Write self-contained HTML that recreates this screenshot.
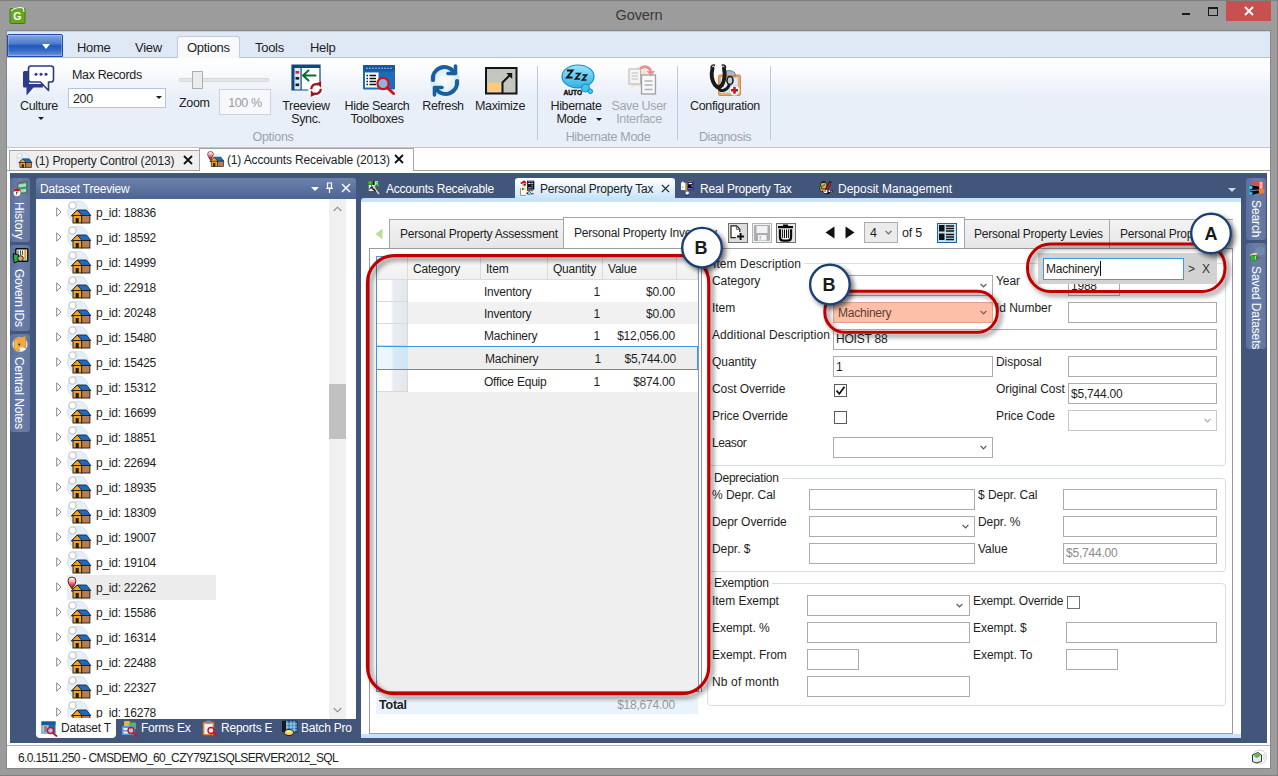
<!DOCTYPE html>
<html>
<head>
<meta charset="utf-8">
<title>Govern</title>
<style>
*{box-sizing:border-box;margin:0;padding:0}
html,body{width:1278px;height:776px;overflow:hidden;background:#9b9b9b;font-family:"Liberation Sans",sans-serif;font-size:12px;color:#1e1e1e}
.abs{position:absolute}
#frame{position:absolute;left:0;top:0;width:1278px;height:776px;background:#9c9c9c;box-shadow:inset 0 1px 0 #808080,inset -1px 0 0 #808080,inset 0 -1px 0 #808080}
#title{position:absolute;left:0;top:7px;width:1278px;text-align:center;font-size:14.5px;letter-spacing:-.1px;color:#3a3a3a}
#closebtn{position:absolute;left:1226px;top:1px;width:45px;height:20px;background:#c75050}
#content{position:absolute;left:7px;top:31px;width:1263px;height:737px;background:#fff;outline:1px solid #868686}
/* ribbon */
#tabrow{position:absolute;left:0;top:0;width:1263px;height:27px;background:#dfe8f5;border-top:1px solid #c3d0e4;border-bottom:1px solid #b4c6dd}
#appbtn{position:absolute;left:0;top:2px;width:56px;height:23px;border:1px solid #1d4db0;border-radius:2px 2px 0 0;background:linear-gradient(#86a6df 0%,#4f7dcf 40%,#2256b8 52%,#3a6cc8 75%,#6d95da 100%);box-shadow:inset 0 0 0 1px rgba(255,255,255,.25)}
.rtab{position:absolute;top:8px;letter-spacing:-0.3px;font-size:13px;color:#1e1e1e}
#opttab{position:absolute;left:170px;top:4px;width:63px;height:23px;background:#f7f9fd;border:1px solid #c0cde0;border-bottom:none;border-radius:3px 3px 0 0}
#ribbon{position:absolute;left:0;top:27px;width:1263px;height:90px;z-index:1;background:linear-gradient(#ffffff 0%,#fbfcfe 12%,#eef3fa 34%,#e9eff9 45%,#e9eff9 100%);border-bottom:1px solid #b6c6db}
.rlabel{position:absolute;text-align:center;font-size:12.5px;letter-spacing:-0.35px;line-height:13px;margin-top:1px;color:#1e1e1e;white-space:nowrap}
.rgroup{position:absolute;font-size:12.5px;letter-spacing:-0.3px;color:#9aa2ad;white-space:nowrap;text-align:center}
.rsep{position:absolute;top:8px;width:1px;height:74px;background:#bccadc}
.darr{position:absolute;width:0;height:0;border-left:3px solid transparent;border-right:3px solid transparent;border-top:3px solid #1a1a1a}
/* doc tabs */
#doctabs{position:absolute;left:0;top:116px;width:1263px;height:26px;background:#fff}

/* doc tabs content */
.dtab{position:absolute;font-size:12px;white-space:nowrap;color:#1e1e1e;letter-spacing:-0.15px}
.xmark{position:absolute;width:10px;height:10px}
/* side strips */
.vtab{position:absolute;width:20px;background:linear-gradient(90deg,#5b6f9b,#6a7ea8 50%,#61759f);border-radius:3px}
.vtxt{position:absolute;left:0;top:0;transform-origin:0 0;transform:rotate(90deg);font-size:14px;color:#fff;white-space:nowrap}
/* tree */
#tvhead{position:absolute;left:26px;top:5px;width:320px;height:21px;background:linear-gradient(#6d82ab,#4d6494);border-radius:3px 3px 0 0;color:#fff;font-size:12px}
#tvbody{position:absolute;left:26px;top:26px;width:320px;height:520px;background:#fff;overflow:hidden}
.trow{position:absolute;left:0;height:25px;width:300px}
.trow .tx{position:absolute;left:60px;top:6px;font-size:12px;letter-spacing:-0.25px;white-space:nowrap}
.trow svg.hs{position:absolute;left:30px;top:0}
.trow .ex{position:absolute;left:20px;top:7px}

/* page overlay in absolute page coords */
#pg{position:absolute;left:0;top:0;width:1278px;height:776px}
#pg div,#pg svg{position:absolute}
.wt{color:#fff;font-size:12px;letter-spacing:-0.22px;white-space:nowrap}
.bt{color:#1e1e1e;font-size:12px;letter-spacing:-0.22px;white-space:nowrap}
.fl{letter-spacing:-0.05px !important}
.itab{background:linear-gradient(#f3f3f3,#e6e6e6);border:1px solid #a6a6a6}
.inp{background:#fff;border:1px solid #ababab}
.grp{border:1px solid #d5dfe8;border-radius:4px}
.gl{background:#fff;padding:0 3px 0 2px}
.chev{width:7px;height:5px}
.cb{width:13px;height:13px;background:#fff;border:1px solid #5a5a5a}
.gh{top:257px;height:23px;background:linear-gradient(#fafafa,#f0f0f0);border-right:1px solid #dcdcdc;border-bottom:1px solid #dcdcdc}
.rh{left:377px;width:31px;height:22px;background:linear-gradient(90deg,#ffffff 45%,#e9edf1 55%,#e4e8ec);border-right:1px solid #d9d9d9;border-bottom:1px solid #d9d9d9}
/* main dark */
#main{position:absolute;left:3px;top:142px;width:1257px;height:570px;background:#42557a}
#status{position:absolute;left:0px;top:714px;width:1263px;height:23px;background:#fff;border-top:1px solid #b0b0b0}
</style>
</head>
<body>
<svg width="0" height="0" style="position:absolute"><defs><linearGradient id="ping" x1="0" y1="0" x2="0" y2="1"><stop offset="0" stop-color="#fff"/><stop offset=".35" stop-color="#f8b0b4"/><stop offset=".7" stop-color="#ea2a36"/><stop offset="1" stop-color="#c81420"/></linearGradient>
<symbol id="house" viewBox="0 0 26 25">
  <ellipse cx="12" cy="12" rx="10.5" ry="11" fill="#e4eff8" stroke="#d8dde2" stroke-width=".8"/>
  <circle cx="6.5" cy="5.5" r="3.6" fill="#fff" stroke="#c9c9c9" stroke-width="1.4"/>
  <path d="M6 15.5 L11.2 10 H20.5 L24.8 15.5 Z" fill="#1c6bc0" stroke="#1a2a44" stroke-width=".9" stroke-linejoin="round"/>
  <path d="M5.3 16 L11.2 10 L16.6 16 Z" fill="#f5a21d" stroke="#1a1a1a" stroke-width=".9" stroke-linejoin="round"/>
  <rect x="7" y="15.5" width="8.7" height="7.5" fill="#f5a21d" stroke="#1a1a1a" stroke-width=".9"/>
  <rect x="15.7" y="15.5" width="8.2" height="7.5" fill="#b87c4e" stroke="#1a1a1a" stroke-width=".9"/>
  <rect x="9.7" y="18" width="3" height="5" fill="#1a1a1a"/>
</symbol>
<symbol id="housepin" viewBox="0 0 26 25">
  <ellipse cx="13" cy="13" rx="9" ry="9" fill="#e9f1f8"/>
  <path d="M6 15.5 L11.2 10 H20.5 L24.8 15.5 Z" fill="#1c6bc0" stroke="#1a2a44" stroke-width=".9" stroke-linejoin="round"/>
  <path d="M5.3 16 L11.2 10 L16.6 16 Z" fill="#f5a21d" stroke="#1a1a1a" stroke-width=".9" stroke-linejoin="round"/>
  <rect x="7" y="15.5" width="8.7" height="7.5" fill="#f5a21d" stroke="#1a1a1a" stroke-width=".9"/>
  <rect x="15.7" y="15.5" width="8.2" height="7.5" fill="#b87c4e" stroke="#1a1a1a" stroke-width=".9"/>
  <rect x="9.7" y="18" width="3" height="5" fill="#1a1a1a"/>
  <path d="M6 14 Q2 8.5 2 6 A4 4 0 0 1 10 6 Q10 8.5 6 14Z" fill="url(#ping)" stroke="#3a1c1c" stroke-width=".9"/>
</symbol>
<symbol id="xm" viewBox="0 0 10 10"><path d="M1 1 L9 9 M9 1 L1 9" stroke="#111" stroke-width="1.8"/></symbol>
<symbol id="xmw" viewBox="0 0 10 10"><path d="M1 1 L9 9 M9 1 L1 9" stroke="#fff" stroke-width="1.5"/></symbol>
<symbol id="exp" viewBox="0 0 6 10"><path d="M.7 .8 L5 5 L.7 9.2 Z" fill="#fff" stroke="#8a8a8a" stroke-width="1"/></symbol>
</defs></svg>
<div id="frame">
  <div id="title">Govern</div>
  <div id="closebtn"></div>
  <svg class="abs" style="left:9px;top:7px" width="17" height="17" viewBox="0 0 17 17">
    <rect x="1" y="1.5" width="15" height="15" rx="1" fill="#69a81e" stroke="#3f7d12" stroke-width="1"/>
    <path d="M2 4 Q5 .5 9 1 M8 1 Q12 0 14.5 1.5 L15 5" stroke="#f4f8ec" stroke-width="1.1" fill="none"/>
    <text x="4.2" y="13" font-family="Liberation Sans" font-weight="bold" font-size="10.5" fill="#fff">G</text>
  </svg>
  <div class="abs" style="left:1182px;top:13px;width:8px;height:2px;background:#1a1a1a"></div>
  <div class="abs" style="left:1208px;top:7px;width:10px;height:9px;border:1px solid #1a1a1a;border-top-width:2px"></div>
  <svg class="abs" style="left:1244px;top:6px" width="10" height="10" viewBox="0 0 10 10"><path d="M1 1 L9 9 M9 1 L1 9" stroke="#fff" stroke-width="1.8"/></svg>
</div>
<div id="content">
  <div id="tabrow">
    <div id="appbtn"><div class="abs" style="left:34px;top:9px;width:0;height:0;border-left:4px solid transparent;border-right:4px solid transparent;border-top:5px solid #fff"></div></div>
    <div id="opttab"></div>
    <div class="rtab" style="left:70px">Home</div>
    <div class="rtab" style="left:128px">View</div>
    <div class="rtab" style="left:180px">Options</div>
    <div class="rtab" style="left:248px">Tools</div>
    <div class="rtab" style="left:303px">Help</div>
  </div>
  <div id="ribbon">
    <!-- Culture -->
    <svg class="abs" style="left:14px;top:6px" width="36" height="34" viewBox="0 0 36 34">
      <path d="M3.5 7 H8 V20 H22 V23.5 H12.5 L5.5 31.5 V23.5 H3.5 Q2 23.5 2 22 V8.5 Q2 7 3.5 7Z" fill="#2b3a8c"/>
      <path d="M10 2 H30 Q32.5 2 32.5 4.5 V15.5 Q32.5 18 30 18 H27.5 V26.5 L19.5 18 H10 Q7.5 18 7.5 15.5 V4.5 Q7.5 2 10 2Z" fill="#fff" stroke="#2b3a8c" stroke-width="1.6" stroke-linejoin="round"/>
      <circle cx="15" cy="10.3" r="1.5" fill="#2b3a8c"/><circle cx="20" cy="10.3" r="1.5" fill="#2b3a8c"/><circle cx="25" cy="10.3" r="1.5" fill="#2b3a8c"/>
    </svg>
    <div class="rlabel" style="left:2px;top:41px;width:60px">Culture</div>
    <div class="darr" style="left:31px;top:59px"></div>
    <!-- Max records -->
    <div class="rlabel" style="left:65px;top:10px;text-align:left">Max Records</div>
    <div class="abs" style="left:61px;top:30px;width:98px;height:20px;background:#fff;border:1px solid #b3c6de"></div>
    <div class="rlabel" style="left:66px;top:34px;text-align:left">200</div>
    <div class="darr" style="left:149px;top:38px"></div>
    <!-- Zoom slider -->
    <div class="abs" style="left:172px;top:20px;width:90px;height:4px;background:#e3e5e7;border:1px solid #d5d8db;border-radius:1px"></div>
    <div class="abs" style="left:185px;top:13px;width:11px;height:18px;background:#ececec;border:1px solid #aeaeae"></div>
    <div class="rlabel" style="left:172px;top:38px;text-align:left">Zoom</div>
    <div class="abs" style="left:212px;top:31px;width:52px;height:26px;background:#f6f8fc;border:1px solid #cdd2d9"></div>
    <div class="rlabel" style="left:212px;top:38px;width:52px;color:#9a9a9a">100 %</div>
    <!-- Treeview sync -->
    <svg class="abs" style="left:283px;top:6px" width="36" height="36" viewBox="0 0 36 36">
      <rect x="2" y="1" width="28" height="25" fill="#fff"/>
      <rect x="2" y="1" width="9" height="25" fill="#dbe9f7"/>
      <path d="M2 1 H30 V26 H2 Z" fill="none" stroke="#0e4883" stroke-width="1.2"/>
      <rect x="2" y="1" width="28" height="3" fill="#0e4883"/>
      <rect x="2" y="1" width="2.5" height="25" fill="#0e4883"/>
      <rect x="10.5" y="4" width="1.2" height="22" fill="#0e4883"/>
      <rect x="5.5" y="7" width="3.6" height="2.6" fill="#e8202a"/>
      <rect x="5.5" y="13" width="3.6" height="2.6" fill="#1a1a1a"/>
      <rect x="5.5" y="19.5" width="3.6" height="2.6" fill="#1a1a1a"/>
      <path d="M13 11.5 L18.5 6.5 M13 11.5 L18.5 16.5 M13 11.5 H25.5" stroke="#0c6b38" stroke-width="2" fill="none" stroke-linecap="round"/>
      <circle cx="26" cy="25" r="8" fill="#fff"/>
      <path d="M21.2 25.2 A4.9 4.9 0 0 1 28.2 20.6" stroke="#9c1624" stroke-width="2.3" fill="none"/>
      <path d="M26.2 19.2 L31.2 17.2 L31.2 23.8 Z" fill="#9c1624"/>
      <path d="M30.8 24.8 A4.9 4.9 0 0 1 23.8 29.4" stroke="#9c1624" stroke-width="2.3" fill="none"/>
      <path d="M25.8 30.8 L20.8 32.8 L20.8 26.2 Z" fill="#9c1624"/>
    </svg>
    <div class="rlabel" style="left:269px;top:41px;width:60px">Treeview<br>Sync.</div>

    <!-- Hide Search Toolboxes : ribbon origin = (7,58) -->
    <svg class="abs" style="left:354px;top:5px" width="36" height="36" viewBox="0 0 36 36">
      <rect x="2" y="2" width="32" height="24.5" rx="1" fill="#1d6cb8"/>
      <rect x="2" y="2" width="32" height="6.5" rx="1" fill="#155a9e"/>
      <path d="M5 5.3 H31" stroke="#6da3d6" stroke-width="1.2" stroke-dasharray="2 1"/>
      <rect x="4" y="9.5" width="13.5" height="15" fill="#fff"/>
      <path d="M8.5 12.5 H15 M8.5 15.5 H15 M8.5 18.5 H15 M8.5 21.5 H15" stroke="#111" stroke-width="1.6"/>
      <path d="M5.5 12.5 H7 M5.5 15.5 H7 M5.5 18.5 H7 M5.5 21.5 H7" stroke="#111" stroke-width="1.4"/>
      <path d="M26.5 25 L32.5 30.5" stroke="#cf1020" stroke-width="3" stroke-linecap="round"/>
      <circle cx="22" cy="20.5" r="5.6" fill="#8db4dc" stroke="#cf1020" stroke-width="2.2"/>
    </svg>
    <div class="rlabel" style="left:330px;top:41px;width:80px">Hide Search<br>Toolboxes</div>
    <!-- Refresh -->
    <svg class="abs" style="left:420px;top:5px" width="36" height="36" viewBox="0 0 36 36">
      <defs><radialGradient id="rg1"><stop offset="0" stop-color="#ffffff"/><stop offset="1" stop-color="#cfe8f7"/></radialGradient></defs>
      <circle cx="18" cy="17.5" r="15" fill="url(#rg1)"/>
      <path d="M6 17 A11.5 11.5 0 0 1 26.5 8.5" stroke="#175f9e" stroke-width="4.2" fill="none" stroke-linecap="round"/>
      <path d="M21 10.5 H28.5 V3" stroke="#175f9e" stroke-width="3.6" fill="none" stroke-linecap="round" stroke-linejoin="round"/>
      <path d="M30 18 A11.5 11.5 0 0 1 9.5 26.5" stroke="#175f9e" stroke-width="4.2" fill="none" stroke-linecap="round"/>
      <path d="M15 24.5 H7.5 V32" stroke="#175f9e" stroke-width="3.6" fill="none" stroke-linecap="round" stroke-linejoin="round"/>
    </svg>
    <div class="rlabel" style="left:406px;top:41px;width:60px">Refresh</div>
    <!-- Maximize -->
    <svg class="abs" style="left:476px;top:7px" width="36" height="32" viewBox="0 0 36 32">
      <rect x="3" y="3" width="30.5" height="25.5" fill="#c2c7c1" stroke="#141414" stroke-width="2"/>
      <rect x="4.5" y="17.5" width="14" height="9.5" fill="#fcca7a"/>
      <path d="M19.5 28 V17.5 L28 9" stroke="#141414" stroke-width="2" fill="none"/>
      <path d="M23.3 8 H29.2 V13.9 Z" fill="#141414"/>
    </svg>
    <div class="rlabel" style="left:463px;top:41px;width:60px">Maximize</div>
    <div class="rsep" style="left:530px"></div>
    <!-- Hibernate -->
    <svg class="abs" style="left:552px;top:4px" width="40" height="36" viewBox="0 0 40 36">
      <defs><linearGradient id="hg" x1="0" y1="0" x2="0" y2="1"><stop offset="0" stop-color="#9be6fb"/><stop offset="1" stop-color="#2fb0e4"/></linearGradient></defs>
      <ellipse cx="19" cy="14.5" rx="16" ry="11.5" fill="url(#hg)" stroke="#178cc9" stroke-width="1.2"/>
      <circle cx="26.5" cy="26" r="4" fill="#4cc0ee" stroke="#178cc9" stroke-width="1"/>
      <circle cx="31.3" cy="29.3" r="2.3" fill="#4cc0ee" stroke="#178cc9" stroke-width="1"/>
      <path d="M8 8.5 H13.5 L8 15.5 H13.5" stroke="#141414" stroke-width="1.9" fill="none"/>
      <path d="M16.5 11.5 H21 L16.5 17 H21" stroke="#141414" stroke-width="1.7" fill="none"/>
      <path d="M23.5 13 H27.5 L23.5 18 H27.5" stroke="#141414" stroke-width="1.6" fill="none"/>
      <text x="4.5" y="33" font-family="Liberation Sans" font-weight="bold" font-size="6.6" fill="#111" stroke="#111" stroke-width="0.4">AUTO</text>
    </svg>
    <div class="rlabel" style="left:539px;top:41px;width:60px">Hibernate<br>Mode&nbsp;&nbsp;&nbsp;</div>
    <div class="darr" style="left:589px;top:60px"></div>
    <!-- Save User Interface (disabled) -->
    <svg class="abs" style="left:617px;top:5px;opacity:.62" width="36" height="36" viewBox="0 0 36 36">
      <path d="M8 10 L14 3 L17 8 L24 5 L22 12 L28 17 L21 19 L20 27 L14 22 L7 25 L9 18 L3 14 Z" fill="#fbd9a0"/>
      <rect x="5" y="6" width="11.5" height="15" fill="#f4f4f4" stroke="#8a8a8a" stroke-width="1"/>
      <path d="M7.5 10 H14 M7.5 13 H14 M7.5 16 H14" stroke="#9a9a9a" stroke-width="1.2"/>
      <rect x="17.5" y="12" width="14" height="19" fill="#fafafa" stroke="#6e6e6e" stroke-width="1.3"/>
      <path d="M20.5 18 H28.5 M20.5 22 H28.5 M20.5 26.5 H28.5" stroke="#8a8a8a" stroke-width="1.5"/>
      <path d="M16 5.5 Q23 1 27 8" stroke="#e0505a" stroke-width="3" fill="none"/>
      <path d="M22.5 8 H31 L27 13.5 Z" fill="#e0505a"/>
    </svg>
    <div class="rlabel" style="left:602px;top:41px;width:60px;color:#a3a7ad">Save User<br>Interface</div>
    <div class="rsep" style="left:670px"></div>
    <!-- Configuration -->
    <svg class="abs" style="left:700px;top:5px" width="40" height="38" viewBox="0 0 40 38">
      <rect x="11.5" y="12" width="22" height="20.5" rx="1.5" fill="#f2a65e" stroke="#d88a3c" stroke-width="1"/>
      <rect x="13.5" y="14.5" width="17.5" height="15.5" fill="#dfeaf4" stroke="#b4c0cc" stroke-width=".8"/>
      <path d="M17 9.5 Q22 5.5 27.5 9.5 L28.5 13 H16.5 Z" fill="#b0b8be" stroke="#6a747c" stroke-width=".9"/>
      <path d="M5.5 5.5 Q3 15 8 22 Q11.5 26.5 15 22 Q19 15 17 5.5" stroke="#1a1a1a" stroke-width="3.9" fill="none" stroke-linecap="round"/>
      <path d="M4.2 4.8 Q4.5 1.5 8 2.5" stroke="#2a2a2a" stroke-width="2" fill="none"/>
      <path d="M14.8 2.5 Q18.3 1.5 18.3 4.8" stroke="#1a1a1a" stroke-width="2.2" fill="none"/>
      <path d="M5.2 3.8 Q6 2.8 7.2 3.2 M15.6 3.2 Q16.8 2.8 17.4 3.8" stroke="#f0f0f0" stroke-width="1" fill="none"/>
      <path d="M11.5 24.5 Q12.5 29 17.5 27 Q22.5 25 22.5 19" stroke="#1a1a1a" stroke-width="3" fill="none"/>
      <ellipse cx="23" cy="17.5" rx="3" ry="4" fill="#c4cacf" stroke="#1a1a1a" stroke-width="1.6"/>
      <circle cx="27.5" cy="27.3" r="5.2" fill="#fff" stroke="#c4c4c4" stroke-width=".8"/>
      <path d="M27.5 23.8 V30.8 M24 27.3 H31" stroke="#cf121e" stroke-width="2.6"/>
    </svg>
    <div class="rlabel" style="left:678px;top:41px;width:80px">Configuration</div>
    <div class="rsep" style="left:763px"></div>
    <div class="rgroup" style="left:236px;top:72px;width:60px">Options</div>
    <div class="rgroup" style="left:551px;top:72px;width:100px">Hibernate Mode</div>
    <div class="rgroup" style="left:678px;top:72px;width:80px">Diagnosis</div>
  </div>
  <div id="doctabs">
    <div class="abs" style="left:0;top:23px;width:193px;height:1px;background:#a3a3a3"></div>
    <div class="abs" style="left:2px;top:3px;width:191px;height:21px;background:#efefef;border:1px solid #a3a3a3"></div>
    <div class="abs" style="left:192px;top:1px;width:215px;height:23px;background:#fff;border:1px solid #a3a3a3;border-bottom:none"></div>
    <div class="abs" style="left:406px;top:23px;width:857px;height:1px;background:#a3a3a3"></div>
    <svg class="abs" style="left:8px;top:5px" width="18" height="17"><use href="#house"/></svg>
    <div class="dtab" style="left:28px;top:7px">(1) Property Control (2013)</div>
    <svg class="xmark" style="left:176px;top:8px"><use href="#xm"/></svg>
    <svg class="abs" style="left:199px;top:3px" width="19" height="18"><use href="#housepin"/></svg>
    <div class="dtab" style="left:220px;top:6px">(1) Accounts Receivable (2013)</div>
    <svg class="xmark" style="left:387px;top:7px"><use href="#xm"/></svg>
  </div>
  <div id="main">
    <!-- left vertical tabs -->
    <div class="vtab" style="left:0;top:5px;height:64px"><div class="vtxt" style="left:16px;top:24px;font-size:12px">History</div></div>
    <div class="vtab" style="left:0;top:72px;height:86px"><div class="vtxt" style="left:16px;top:24px;font-size:12px;letter-spacing:-.3px">Govern IDs</div></div>
    <div class="vtab" style="left:0;top:161px;height:98px"><div class="vtxt" style="left:16px;top:23px;font-size:12px;letter-spacing:-.1px">Central Notes</div></div>
    <!-- treeview -->
    <div id="tvhead"><div class="abs" style="left:4px;top:4px;letter-spacing:-0.2px">Dataset Treeview</div>
      <div class="abs" style="left:275px;top:9px;width:0;height:0;border-left:4px solid transparent;border-right:4px solid transparent;border-top:4px solid #fff"></div>
      <svg class="abs" style="left:289px;top:4px" width="9" height="12" viewBox="0 0 9 12"><path d="M2.5 1 H6.5 V6 H2.5 Z M1 6.5 H8 M4.5 6.5 V11" stroke="#fff" stroke-width="1.2" fill="none"/></svg>
      <svg class="xmark" style="left:305px;top:5px"><use href="#xmw"/></svg>
    </div>
    <div id="tvbody">
      <div class="trow" style="top:1px"><svg class="ex" width="6" height="10"><use href="#exp"/></svg><svg class="hs" width="26" height="25"><use href="#house"/></svg><div class="tx">p_id: 18836</div></div>
      <div class="trow" style="top:26px"><svg class="ex" width="6" height="10"><use href="#exp"/></svg><svg class="hs" width="26" height="25"><use href="#house"/></svg><div class="tx">p_id: 18592</div></div>
      <div class="trow" style="top:51px"><svg class="ex" width="6" height="10"><use href="#exp"/></svg><svg class="hs" width="26" height="25"><use href="#house"/></svg><div class="tx">p_id: 14999</div></div>
      <div class="trow" style="top:76px"><svg class="ex" width="6" height="10"><use href="#exp"/></svg><svg class="hs" width="26" height="25"><use href="#house"/></svg><div class="tx">p_id: 22918</div></div>
      <div class="trow" style="top:101px"><svg class="ex" width="6" height="10"><use href="#exp"/></svg><svg class="hs" width="26" height="25"><use href="#house"/></svg><div class="tx">p_id: 20248</div></div>
      <div class="trow" style="top:126px"><svg class="ex" width="6" height="10"><use href="#exp"/></svg><svg class="hs" width="26" height="25"><use href="#house"/></svg><div class="tx">p_id: 15480</div></div>
      <div class="trow" style="top:151px"><svg class="ex" width="6" height="10"><use href="#exp"/></svg><svg class="hs" width="26" height="25"><use href="#house"/></svg><div class="tx">p_id: 15425</div></div>
      <div class="trow" style="top:176px"><svg class="ex" width="6" height="10"><use href="#exp"/></svg><svg class="hs" width="26" height="25"><use href="#house"/></svg><div class="tx">p_id: 15312</div></div>
      <div class="trow" style="top:201px"><svg class="ex" width="6" height="10"><use href="#exp"/></svg><svg class="hs" width="26" height="25"><use href="#house"/></svg><div class="tx">p_id: 16699</div></div>
      <div class="trow" style="top:226px"><svg class="ex" width="6" height="10"><use href="#exp"/></svg><svg class="hs" width="26" height="25"><use href="#house"/></svg><div class="tx">p_id: 18851</div></div>
      <div class="trow" style="top:251px"><svg class="ex" width="6" height="10"><use href="#exp"/></svg><svg class="hs" width="26" height="25"><use href="#house"/></svg><div class="tx">p_id: 22694</div></div>
      <div class="trow" style="top:276px"><svg class="ex" width="6" height="10"><use href="#exp"/></svg><svg class="hs" width="26" height="25"><use href="#house"/></svg><div class="tx">p_id: 18935</div></div>
      <div class="trow" style="top:301px"><svg class="ex" width="6" height="10"><use href="#exp"/></svg><svg class="hs" width="26" height="25"><use href="#house"/></svg><div class="tx">p_id: 18309</div></div>
      <div class="trow" style="top:326px"><svg class="ex" width="6" height="10"><use href="#exp"/></svg><svg class="hs" width="26" height="25"><use href="#house"/></svg><div class="tx">p_id: 19007</div></div>
      <div class="trow" style="top:351px"><svg class="ex" width="6" height="10"><use href="#exp"/></svg><svg class="hs" width="26" height="25"><use href="#house"/></svg><div class="tx">p_id: 19104</div></div>
      <div class="trow" style="top:376px"><div class="abs" style="left:31px;top:0;width:149px;height:25px;background:#ececec"></div><svg class="ex" width="6" height="10"><use href="#exp"/></svg><svg class="hs" width="26" height="25"><use href="#housepin"/></svg><div class="tx">p_id: 22262</div></div>
      <div class="trow" style="top:401px"><svg class="ex" width="6" height="10"><use href="#exp"/></svg><svg class="hs" width="26" height="25"><use href="#house"/></svg><div class="tx">p_id: 15586</div></div>
      <div class="trow" style="top:426px"><svg class="ex" width="6" height="10"><use href="#exp"/></svg><svg class="hs" width="26" height="25"><use href="#house"/></svg><div class="tx">p_id: 16314</div></div>
      <div class="trow" style="top:451px"><svg class="ex" width="6" height="10"><use href="#exp"/></svg><svg class="hs" width="26" height="25"><use href="#house"/></svg><div class="tx">p_id: 22488</div></div>
      <div class="trow" style="top:476px"><svg class="ex" width="6" height="10"><use href="#exp"/></svg><svg class="hs" width="26" height="25"><use href="#house"/></svg><div class="tx">p_id: 22327</div></div>
      <div class="trow" style="top:501px"><svg class="ex" width="6" height="10"><use href="#exp"/></svg><svg class="hs" width="26" height="25"><use href="#house"/></svg><div class="tx">p_id: 16278</div></div>
      <div class="abs" style="left:293px;top:0;width:17px;height:520px;background:#f0f0f0"></div>
      <div class="abs" style="left:293px;top:185px;width:17px;height:55px;background:#c1c1c1"></div>
      <svg class="abs" style="left:297px;top:7px" width="9" height="6" viewBox="0 0 9 6"><path d="M.7 5 L4.5 1.2 L8.3 5" stroke="#8c8c8c" stroke-width="1.1" fill="none"/></svg>
      <svg class="abs" style="left:297px;top:508px" width="9" height="6" viewBox="0 0 9 6"><path d="M.7 1 L4.5 4.8 L8.3 1" stroke="#8c8c8c" stroke-width="1.1" fill="none"/></svg>
    </div>
  </div>
  <div id="status"></div>
</div>
<div id="pg">
<div style="left:515px;top:178px;width:160px;height:21px;background:linear-gradient(#ffffff,#eaf5fd 40%,#c6e4f9);border-radius:3px 3px 0 0"></div>
<div style="left:361px;top:198px;width:880px;height:540px;background:#c6e4f9;border-radius:3px 0 0 0"></div>
<div style="left:361px;top:202px;width:880px;height:532px;background:#fff"></div>
<div class="wt" style="left:386px;top:182px">Accounts Receivable</div>
<div class="bt" style="left:540px;top:182px">Personal Property Tax</div>
<svg style="left:661px;top:184px" width="9" height="9" viewBox="0 0 10 10"><path d="M1 1 L9 9 M9 1 L1 9" stroke="#222" stroke-width="1.4"/></svg>
<div class="wt" style="left:700px;top:182px">Real Property Tax</div>
<div class="wt" style="left:838px;top:182px;letter-spacing:0">Deposit Management</div>
<div style="left:1228px;top:188px;width:0;height:0;border-left:4px solid transparent;border-right:4px solid transparent;border-top:4px solid #cdd6e6"></div>
<svg style="left:367px;top:180px" width="14" height="15" viewBox="0 0 14 15"><rect x="1" y="1" width="11.5" height="5" fill="#1c8a2c"/><circle cx="3" cy="3" r="1.4" fill="#9ad020"/><circle cx="3" cy="3" r=".6" fill="#111"/><path d="M6.5 1 V5.5" stroke="#111" stroke-width=".9"/><path d="M8.5 5.5 V1.5 H10.5 V3.3 H8.8 L11.5 5.8" stroke="#e8f4e8" stroke-width=".8" fill="none"/><rect x="1.8" y="5" width="5" height="6" fill="#eeeeee"/><path d="M2.5 9.5 L4 7 L5.5 9.5 M4.5 5.5 L6.5 10" stroke="#111" stroke-width="1" fill="none"/><path d="M7 5 L8 9 L12 14" stroke="#e8dcb8" stroke-width="1.3" fill="none"/><path d="M6 9 L8.5 11" stroke="#111" stroke-width="1.2"/></svg>
<svg style="left:519px;top:180px" width="17" height="17" viewBox="0 0 17 17"><rect x="8.5" y="1" width="6.5" height="8.5" fill="#0a0a14" stroke="#000" stroke-width=".6"/><rect x="9" y="1" width="5.5" height="1.3" fill="#6a5ad0"/><rect x="9.3" y="3" width="2.2" height="1.1" fill="#e8f4ff"/><rect x="12.3" y="3" width="1.8" height="1.1" fill="#d8d8b8"/><rect x="12.2" y="4.8" width="2" height="1.4" fill="#6a5ad0"/><rect x="12.2" y="6.4" width="1.8" height="1.3" fill="#1c9a1c"/><rect x="9.2" y="7.2" width="2.6" height=".9" fill="#a8a8b8"/><rect x="9" y="8.5" width="5.5" height="1.2" fill="#6a5ad0"/><path d="M2 3 Q4.5 0 7.5 2.5 L7 4 H2.5 Z" fill="#d82020"/><path d="M1.5 3 H3.5 M3.5 1.5 Q5 .8 6.5 1.6" stroke="#1a1a1a" stroke-width=".9" fill="none"/><rect x="3" y="3.5" width="4" height="3.5" fill="#f0d8c0"/><rect x="4.5" y="4" width="2.2" height="1.6" fill="#7a1010"/><rect x="1.8" y="8" width="5.5" height="7" fill="#fbfbfb"/><path d="M1.5 8 V15.3 H7" stroke="#8a8a8a" stroke-width=".9" fill="none"/><rect x="5" y="8" width="1.8" height="1.6" fill="#f4e400"/><rect x="3" y="8.2" width="1.6" height="1.6" fill="#222"/><path d="M8 10.5 L14 10.8 M8.5 12.5 L10.5 11.5 L12 13" stroke="#6a4a2a" stroke-width="1" fill="none"/><rect x="8.5" y="13.5" width="3" height="1.5" fill="#18a8e8"/><rect x="12" y="13" width="2.5" height="1.5" fill="#c818a8"/><rect x="7.5" y="12.6" width="1.4" height="1.4" fill="#111"/></svg>
<svg style="left:680px;top:180px" width="16" height="17" viewBox="0 0 16 17"><rect x="8" y="1" width="6" height="8.5" fill="#0c0c18"/><rect x="8" y="1" width="5.2" height="1.4" fill="#7060d8"/><rect x="8.6" y="3" width="3.6" height="1.2" fill="#f4f4f4"/><rect x="8" y="8" width="5" height="1.2" fill="#7060d8"/><rect x="11.6" y="5.3" width="1.4" height="1.6" fill="#9ad838"/><rect x="12.6" y="1" width="1.4" height="8.5" fill="#4030a0"/><path d="M1 2.5 H2 V1.8 H3.8 V2.8 H5.5 V10 H1 Z" fill="#fbfbfb"/><rect x="2.2" y="6" width="1" height="2.4" fill="#b8b8b8"/><rect x="5.5" y="3" width="1.2" height="7.5" fill="#e0a800"/><path d="M5 10 L8 11.5" stroke="#c8a020" stroke-width="1.2"/><circle cx="7.2" cy="13.2" r="2.1" fill="#fff" stroke="#3838c8" stroke-width=".7"/><path d="M5.4 14.6 Q7.2 16 9 14.6" stroke="#111" stroke-width=".8" fill="none"/></svg>
<svg style="left:818px;top:180px" width="17" height="16" viewBox="0 0 17 16"><path d="M3.5 2.5 H7.5 L9 5 L7.8 9 H3.5 L2.5 5 Z" fill="#f8a848" stroke="#111" stroke-width=".7"/><path d="M3.5 2 H7.5" stroke="#111" stroke-width="1.2"/><circle cx="5" cy="6" r=".9" fill="#1c9a2c"/><circle cx="6.3" cy="4.8" r=".9" fill="#1c9a2c"/><path d="M1.5 6.5 L3 6 L3.8 9 H8 L8.5 11.5 H2.5 Z" fill="#c8a868" stroke="#111" stroke-width=".6"/><path d="M12.5 1.5 L8.5 10.5" stroke="#111" stroke-width="2.6"/><path d="M12.4 2.2 L8.8 10" stroke="#e81820" stroke-width="1.5"/><path d="M8.8 10 L8 12.5" stroke="#f4f4f4" stroke-width="1.4"/><path d="M4.5 10.5 Q7 13.5 10 12.5 Q12 10 14.5 10.5 L15 12 Q12 12 10.5 14 Q6.5 15 4 11.5 Z" fill="#111"/><path d="M5.5 11.5 Q7 13 9 12.5" stroke="#fff" stroke-width="1.1" fill="none"/><circle cx="11.5" cy="11.2" r=".9" fill="#d8f0ff"/><circle cx="13.5" cy="11.8" r=".7" fill="#c8a050"/></svg>
<svg style="left:375px;top:228px" width="8" height="12" viewBox="0 0 8 12"><path d="M7.5 .5 V11.5 L.5 6 Z" fill="#b9dd95"/></svg>
<div class="itab" style="left:389px;top:219px;width:175px;height:30px"></div>
<div class="itab" style="left:964px;top:219px;width:146px;height:30px"></div>
<div class="itab" style="left:1109px;top:219px;width:124px;height:30px;border-right:none"></div>
<div style="left:369px;top:248px;width:864px;height:486px;background:#fff;border:1px solid #9c9c9c"></div>
<div style="left:563px;top:217px;width:402px;height:31px;background:#fff;border:1px solid #a6a6a6;border-bottom:none"></div>
<div class="bt" style="left:400px;top:227px">Personal Property Assessment</div>
<div class="bt" style="left:574px;top:226px">Personal Property Inventory</div>
<div class="bt" style="left:974px;top:227px">Personal Property Levies</div>
<div class="bt" style="left:1120px;top:227px">Personal Property</div>
<div style="left:728px;top:223px;width:20px;height:20px;background:#dddddd;border:1px solid #6e6e6e"></div>
<svg style="left:730px;top:224px" width="17" height="18" viewBox="0 0 17 18"><path d="M5.8 13.6 H1 V1.9 H6.6 L9.8 5.2 V8" stroke="#222" stroke-width="1.2" fill="#fff"/><path d="M6.4 2.2 V5.4 H9.6" stroke="#444" stroke-width=".8" fill="none"/><path d="M10.6 9 V16 M7.1 12.5 H14.1" stroke="#111" stroke-width="1.9"/></svg>
<div style="left:752px;top:223px;width:20px;height:20px;background:#f1f1f1;border:1px solid #a9b5c1"></div>
<svg style="left:754px;top:225px" width="16" height="16" viewBox="0 0 16 16"><rect x="0" y="0" width="16" height="16" rx="1" fill="#adadad"/><rect x="2.5" y="1" width="11" height="7" fill="#f2f2f2"/><rect x="4" y="10" width="8.5" height="5.5" fill="#f4f4f4"/><rect x="5.5" y="11" width="1.6" height="3.6" fill="#c4c4c4"/></svg>
<div style="left:776px;top:223px;width:20px;height:20px;background:#e6e6e6;border:1px solid #6e6e6e"></div>
<svg style="left:777px;top:224px" width="17" height="18" viewBox="0 0 17 18"><rect x="5.8" y=".6" width="5.4" height="2" rx=".8" fill="#0a0a0a"/><rect x="1" y="2" width="15" height="2.2" fill="#0a0a0a"/><path d="M3 5.2 V13.2 Q3 16.6 6.4 16.6 H10.6 Q14 16.6 14 13.2 V5.2" stroke="#0a0a0a" stroke-width="2.3" fill="#fff"/><path d="M5.6 5.5 V14 M7.5 5.5 V14 M9.5 5.5 V14 M11.4 5.5 V14" stroke="#0a0a0a" stroke-width="1"/></svg>
<svg style="left:825px;top:226px" width="10" height="13" viewBox="0 0 10 13"><path d="M9.5 .5 V12.5 L.5 6.5 Z" fill="#111"/></svg>
<svg style="left:845px;top:226px" width="10" height="13" viewBox="0 0 10 13"><path d="M.5 .5 V12.5 L9.5 6.5 Z" fill="#111"/></svg>
<div style="left:864px;top:222px;width:34px;height:21px;background:#ebebeb;border:1px solid #adadad"></div>
<div class="bt" style="left:870px;top:226px;font-size:12.5px">4</div>
<svg class="chev" style="left:885px;top:230px" viewBox="0 0 7 5"><path d="M.6 .8 L3.5 3.9 L6.4 .8" stroke="#666" stroke-width="1.2" fill="none"/></svg>
<div class="bt" style="left:902px;top:226px;font-size:12.5px">of 5</div>
<div style="left:937px;top:223px;width:20px;height:20px;background:#c1e0f5;border:1px solid #20609c"></div>
<svg style="left:938px;top:224px" width="17" height="17" viewBox="0 0 17 17"><rect x="1" y="1" width="5.5" height="6.5" fill="#111"/><rect x="1" y="9.5" width="5.5" height="6.5" fill="#111"/><path d="M8 2 H16 M8 4.5 H16 M8 7 H16 M8 10.5 H16 M8 13 H16 M8 15.5 H16" stroke="#111" stroke-width="1.3"/></svg>
<div style="left:376px;top:256px;width:323px;height:436px;background:#efefef;border:1px solid #5c8fc4;border-right-color:#7a9cc4"></div>
<div style="left:701px;top:256px;width:1px;height:436px;background:#8e8e8e"></div>
<div class="gh" style="left:377px;width:31px"></div>
<div class="gh" style="left:408px;width:73px"></div>
<div class="bt" style="left:413px;top:262px">Category</div>
<div class="gh" style="left:481px;width:67px"></div>
<div class="bt" style="left:486px;top:262px">Item</div>
<div class="gh" style="left:548px;width:55px"></div>
<div class="bt" style="left:553px;top:262px">Quantity</div>
<div class="gh" style="left:603px;width:74px"></div>
<div class="bt" style="left:608px;top:262px">Value</div>
<div class="gh" style="left:677px;width:21px"></div>
<div style="left:377px;top:280px;width:321px;height:22px;background:#fff"></div>
<div class="rh" style="top:280px"></div>
<div class="bt" style="left:484px;top:285px;width:64px;overflow:hidden">Inventory</div>
<div class="bt" style="left:550px;top:285px;width:50px;text-align:right">1</div>
<div class="bt" style="left:605px;top:285px;width:70px;text-align:right">$0.00</div>
<div style="left:377px;top:302px;width:321px;height:22px;background:#f1f1f1"></div>
<div class="rh" style="top:302px"></div>
<div class="bt" style="left:484px;top:307px;width:64px;overflow:hidden">Inventory</div>
<div class="bt" style="left:550px;top:307px;width:50px;text-align:right">1</div>
<div class="bt" style="left:605px;top:307px;width:70px;text-align:right">$0.00</div>
<div style="left:377px;top:324px;width:321px;height:22px;background:#fff"></div>
<div class="rh" style="top:324px"></div>
<div class="bt" style="left:484px;top:329px;width:64px;overflow:hidden">Machinery</div>
<div class="bt" style="left:550px;top:329px;width:50px;text-align:right">1</div>
<div class="bt" style="left:605px;top:329px;width:70px;text-align:right">$12,056.00</div>
<div style="left:377px;top:347px;width:321px;height:23px;background:#eeeeee"></div>
<div style="left:377px;top:347px;width:31px;height:23px;background:linear-gradient(90deg,#eef6fc 45%,#d6e9f8 55%,#cfe4f5)"></div>
<div style="left:376px;top:346px;width:322px;height:24px;border:1px solid #3d97ea"></div>
<div class="bt" style="left:485px;top:352px;width:64px;overflow:hidden">Machinery</div>
<div class="bt" style="left:551px;top:352px;width:50px;text-align:right">1</div>
<div class="bt" style="left:606px;top:352px;width:70px;text-align:right">$5,744.00</div>
<div style="left:377px;top:370px;width:321px;height:22px;background:#fff"></div>
<div class="rh" style="top:370px"></div>
<div class="bt" style="left:484px;top:375px;width:64px;overflow:hidden">Office Equip</div>
<div class="bt" style="left:550px;top:375px;width:50px;text-align:right">1</div>
<div class="bt" style="left:605px;top:375px;width:70px;text-align:right">$874.00</div>
<div style="left:376px;top:697px;width:322px;height:17px;background:#eaf3fc"></div>
<div class="bt" style="left:379px;top:698px;font-weight:bold;font-size:12.5px">Total</div>
<div class="bt" style="left:605px;top:698px;width:70px;text-align:right;color:#9a9a9a">$18,674.00</div>
<div class="grp" style="left:707px;top:263px;width:519px;height:203px"></div>
<div class="bt gl" style="left:711px;top:257px;letter-spacing:.09px">Item Description</div>
<div class="bt fl" style="left:712px;top:274px;">Category</div>
<div class="bt fl" style="left:712px;top:301px;">Item</div>
<div class="bt" style="left:712px;top:328px;letter-spacing:.09px">Additional Description</div>
<div class="bt fl" style="left:712px;top:355px;">Quantity</div>
<div class="bt fl" style="left:712px;top:382px;">Cost Override</div>
<div class="bt fl" style="left:712px;top:409px;">Price Override</div>
<div class="bt" style="left:712px;top:436px;letter-spacing:-.4px">Leasor</div>
<div class="inp" style="left:833px;top:275px;width:160px;height:21px;"></div>
<svg class="chev" style="left:980px;top:283px" viewBox="0 0 7 5"><path d="M.6 .8 L3.5 3.9 L6.4 .8" stroke="#555" stroke-width="1.2" fill="none"/></svg>
<div class="inp" style="left:833px;top:302px;width:160px;height:21px;background:#fdbfa8;border-color:#e0a090"></div>
<svg class="chev" style="left:980px;top:310px" viewBox="0 0 7 5"><path d="M.6 .8 L3.5 3.9 L6.4 .8" stroke="#7a5a50" stroke-width="1.2" fill="none"/></svg>
<div class="bt" style="left:838px;top:306px;color:#5e4035">Machinery</div>
<div class="inp" style="left:833px;top:329px;width:384px;height:21px;"></div>
<div class="bt" style="left:836px;top:332px">HOIST 88</div>
<div class="inp" style="left:833px;top:356px;width:160px;height:21px;"></div>
<div class="bt" style="left:836px;top:360px">1</div>
<div class="cb" style="left:834px;top:384px"></div>
<svg style="left:835px;top:385px" width="11" height="11" viewBox="0 0 11 11"><path d="M1.5 5.5 L4.3 8.8 L9.5 1.8" stroke="#111" stroke-width="1.7" fill="none"/></svg>
<div class="cb" style="left:834px;top:411px"></div>
<div class="inp" style="left:833px;top:437px;width:160px;height:21px;"></div>
<svg class="chev" style="left:980px;top:445px" viewBox="0 0 7 5"><path d="M.6 .8 L3.5 3.9 L6.4 .8" stroke="#555" stroke-width="1.2" fill="none"/></svg>
<div class="bt fl" style="left:996px;top:274px;">Year</div>
<div class="inp" style="left:1068px;top:275px;width:52px;height:21px;"></div>
<div class="bt" style="left:1071px;top:279px">1988</div>
<div class="bt fl" style="left:996px;top:301px;">Id Number</div>
<div class="inp" style="left:1068px;top:302px;width:149px;height:21px;"></div>
<div class="bt fl" style="left:996px;top:355px;">Disposal</div>
<div class="inp" style="left:1068px;top:356px;width:149px;height:21px;"></div>
<div class="bt fl" style="left:996px;top:382px;">Original Cost</div>
<div class="inp" style="left:1068px;top:383px;width:149px;height:21px;"></div>
<div class="bt" style="left:1071px;top:387px">$5,744.00</div>
<div class="bt fl" style="left:996px;top:409px;">Price Code</div>
<div class="inp" style="left:1068px;top:410px;width:149px;height:21px;border-color:#c8c8c8"></div>
<svg class="chev" style="left:1204px;top:418px" viewBox="0 0 7 5"><path d="M.6 .8 L3.5 3.9 L6.4 .8" stroke="#aaa" stroke-width="1.2" fill="none"/></svg>
<div class="grp" style="left:707px;top:478px;width:519px;height:94px"></div>
<div class="bt gl" style="left:712px;top:471px">Depreciation</div>
<div class="bt fl" style="left:712px;top:488px;">% Depr. Cal</div>
<div class="inp" style="left:809px;top:489px;width:166px;height:21px;"></div>
<div class="bt fl" style="left:978px;top:488px;">$ Depr. Cal</div>
<div class="inp" style="left:1063px;top:489px;width:154px;height:21px;"></div>
<div class="bt fl" style="left:712px;top:515px;">Depr Override</div>
<div class="inp" style="left:809px;top:516px;width:166px;height:21px;"></div>
<svg class="chev" style="left:962px;top:524px" viewBox="0 0 7 5"><path d="M.6 .8 L3.5 3.9 L6.4 .8" stroke="#555" stroke-width="1.2" fill="none"/></svg>
<div class="bt fl" style="left:978px;top:515px;">Depr. %</div>
<div class="inp" style="left:1063px;top:516px;width:154px;height:21px;"></div>
<div class="bt fl" style="left:712px;top:542px;">Depr. $</div>
<div class="inp" style="left:809px;top:543px;width:166px;height:21px;"></div>
<div class="bt fl" style="left:978px;top:542px;">Value</div>
<div class="inp" style="left:1063px;top:543px;width:154px;height:21px;"></div>
<div class="bt" style="left:1066px;top:546px;color:#8a8a8a">$5,744.00</div>
<div class="grp" style="left:707px;top:583px;width:519px;height:123px"></div>
<div class="bt gl" style="left:712px;top:576px">Exemption</div>
<div class="bt fl" style="left:712px;top:594px;">Item Exempt</div>
<div class="inp" style="left:807px;top:595px;width:163px;height:21px;"></div>
<svg class="chev" style="left:956px;top:603px" viewBox="0 0 7 5"><path d="M.6 .8 L3.5 3.9 L6.4 .8" stroke="#555" stroke-width="1.2" fill="none"/></svg>
<div class="bt" style="left:973px;top:594px;letter-spacing:-.2px">Exempt. Override</div>
<div class="cb" style="left:1067px;top:596px;border-color:#707070"></div>
<div class="bt fl" style="left:712px;top:621px;">Exempt. %</div>
<div class="inp" style="left:807px;top:622px;width:163px;height:21px;"></div>
<div class="bt fl" style="left:973px;top:621px;">Exempt. $</div>
<div class="inp" style="left:1066px;top:622px;width:151px;height:21px;"></div>
<div class="bt fl" style="left:712px;top:648px;">Exempt. From</div>
<div class="inp" style="left:807px;top:649px;width:52px;height:21px;"></div>
<div class="bt fl" style="left:973px;top:648px;">Exempt. To</div>
<div class="inp" style="left:1066px;top:649px;width:52px;height:21px;"></div>
<div class="bt" style="left:712px;top:675px;letter-spacing:.15px">Nb of month</div>
<div class="inp" style="left:807px;top:676px;width:163px;height:21px;"></div>
<div style="left:1038px;top:253px;width:179px;height:31px;background:#d2d2d2"></div>
<div style="left:1043px;top:258px;width:141px;height:22px;background:#fff;border:1px solid #3c9aeb"></div>
<div class="bt" style="left:1046px;top:262px">Machinery</div>
<div style="left:1100px;top:261px;width:1px;height:15px;background:#111"></div>
<div class="bt" style="left:1188px;top:262px;color:#333">&gt;</div>
<div class="bt" style="left:1202px;top:262px;color:#333">X</div>
<svg style="left:0;top:0" width="1278" height="776" viewBox="0 0 1278 776">
<defs><filter id="sh" x="-20%" y="-20%" width="150%" height="150%"><feGaussianBlur in="SourceAlpha" stdDeviation="2.5"/><feOffset dx="3" dy="3"/><feComponentTransfer><feFuncA type="linear" slope=".55"/></feComponentTransfer><feMerge><feMergeNode/><feMergeNode in="SourceGraphic"/></feMerge></filter></defs>
<g filter="url(#sh)">
<rect x="367.5" y="255.7" width="341.3" height="438" rx="27" fill="none" stroke="#c00000" stroke-width="3.2"/>
<rect x="824.8" y="291.3" width="172.5" height="41" rx="20" fill="none" stroke="#c00000" stroke-width="3"/>
<rect x="1027.5" y="244" width="197.5" height="47.5" rx="23" fill="none" stroke="#c00000" stroke-width="3"/>
</g>
<g filter="url(#sh)">
<circle cx="702" cy="247.7" r="19.8" fill="#fff" stroke="#1f4173" stroke-width="2.4"/>
<circle cx="829.9" cy="284.6" r="19.8" fill="#fff" stroke="#1f4173" stroke-width="2.4"/>
<circle cx="1211" cy="233.5" r="19.8" fill="#fff" stroke="#1f4173" stroke-width="2.4"/>
</g>
<g font-family="Liberation Sans" font-weight="bold" font-size="18" fill="#1a1a1a" text-anchor="middle">
<text x="701" y="254">B</text><text x="829" y="291">B</text><text x="1211" y="240">A</text>
</g>
</svg>
<div style="left:36px;top:718px;width:80px;height:20px;background:#fff;border-radius:0 0 4px 4px"></div>
<div class="bt" style="left:61px;top:721px">Dataset T</div>
<div class="wt" style="left:141px;top:721px;width:50px;overflow:hidden">Forms Exp</div>
<div class="wt" style="left:221px;top:721px">Reports E</div>
<div class="wt" style="left:301px;top:721px">Batch Pro</div>
<svg style="left:41px;top:721px" width="17" height="16" viewBox="0 0 17 16"><rect x="0.5" y="0.5" width="14" height="12" fill="#1d6cb8"/><rect x="0.5" y="0.5" width="14" height="3.2" fill="#155a9e"/><rect x="1.5" y="4.5" width="6" height="7" fill="#fff"/><path d="M2.5 6 H6.5 M2.5 8 H6.5 M2.5 10 H6.5" stroke="#111" stroke-width="1"/><circle cx="9.5" cy="9.5" r="3" fill="#a8c8e8" stroke="#cf1020" stroke-width="1.4"/><path d="M12 12 L15.5 15" stroke="#cf1020" stroke-width="1.8" stroke-linecap="round"/></svg>
<svg style="left:121px;top:720px" width="18" height="17" viewBox="0 0 18 17"><rect x="3" y="1" width="6" height="7" rx="1" fill="#f0b040"/><rect x="8" y="2.5" width="7" height="7" rx="1" fill="#5ab85a"/><rect x="1" y="6" width="13" height="9" rx="1" fill="#5a9ad8"/><rect x="2.5" y="8" width="6" height="2" fill="#e8f0f8"/><rect x="2.5" y="11.5" width="6" height="2" fill="#e8f0f8"/><circle cx="10" cy="10.5" r="3" fill="#a8c8e8" stroke="#cf1020" stroke-width="1.4"/><path d="M12.5 13 L16 16" stroke="#cf1020" stroke-width="1.8" stroke-linecap="round"/></svg>
<svg style="left:201px;top:720px" width="18" height="17" viewBox="0 0 18 17"><rect x="2" y="2" width="11" height="13" rx="1" fill="#e89a5a" stroke="#b8682c" stroke-width=".8"/><rect x="3.5" y="4" width="8" height="10" fill="#f4f4f4"/><rect x="5" y="0.5" width="5" height="3" rx="1" fill="#888"/><circle cx="10" cy="10.5" r="3" fill="#f8e8e8" stroke="#cf1020" stroke-width="1.4"/><path d="M12.5 13 L16 16" stroke="#cf1020" stroke-width="1.8" stroke-linecap="round"/></svg>
<svg style="left:281px;top:720px" width="18" height="17" viewBox="0 0 18 17"><rect x="2" y="1" width="14" height="11" fill="#2a7ab8" stroke="#123a5c" stroke-width="1"/><path d="M2 4 H16 M2 7 H16 M2 10 H16 M6 1 V12 M10 1 V12 M13 1 V12" stroke="#bfe0f4" stroke-width=".8"/><rect x="1" y="1" width="4" height="11" fill="#1a1a1a"/><ellipse cx="8" cy="12.5" rx="4.5" ry="3" fill="#f0d060" stroke="#222" stroke-width="1"/><ellipse cx="8" cy="11.5" rx="2.5" ry="1.3" fill="#f8e8a0"/></svg>
<div class="bt" style="left:18px;top:751px;letter-spacing:-.62px">6.0.1511.250 - CMSDEMO_60_CZY79Z1SQLSERVER2012_SQL</div>
<svg style="left:1250px;top:749px" width="18" height="17" viewBox="0 0 18 17"><circle cx="9.5" cy="8" r="7" fill="#fdfdfd" stroke="#c8c8c8" stroke-width=".8"/><path d="M2.5 6 L8 3.5 L11.5 6 V12.5 L6 14 L2.5 12.5 Z" fill="#dcebf4" stroke="#333" stroke-width="1"/><path d="M3.5 6.5 L8 4.5 L11 6.5 L6.5 9 Z" fill="#5cb82e"/><path d="M13 6 H15 M13 8 H15 M13 10 H14.5" stroke="#b0b0b0" stroke-width=".7"/></svg>
<div class="vtab" style="left:1246px;top:178px;height:62px"></div>
<div class="vtab" style="left:1246px;top:243px;height:106px"></div>
<svg style="left:11px;top:180px" width="19" height="19" viewBox="0 0 19 19"><path d="M6.5 3 L16 1.5 V13 L6.5 14 Z" fill="#3a9a6a" stroke="#555" stroke-width=".6"/><path d="M7.5 4.5 L15 3.2 V6.5 L7.5 7.5 Z M9 9.5 L15 8.8 V12 L9 12.6 Z" fill="#c8ead8" opacity=".8"/><circle cx="6" cy="12.8" r="4" fill="#f4fcfc" stroke="#444" stroke-width=".6"/><path d="M2.2 11.5 A4 4 0 0 1 9.6 10.8 Z" fill="#c81818"/><path d="M7.5 12 H5.5 V14.5" stroke="#555" stroke-width="1" fill="none"/></svg>
<svg style="left:11px;top:247px" width="19" height="19" viewBox="0 0 19 19"><rect x="4.8" y="1.8" width="12" height="12.5" rx=".8" fill="#f4f4f4" stroke="#0a0a0a" stroke-width="1.4"/><path d="M7 3.5 V8 M9.5 3.5 V8 M11.5 3.5 V8" stroke="#555" stroke-width="1.1"/><rect x="13.2" y="3" width="2.2" height="10" fill="#e8a818"/><path d="M2.5 6.5 Q1.5 11 3.5 16 L7.5 14 V8 Z" fill="#22b04a" stroke="#0a0a0a" stroke-width="1"/><circle cx="9.5" cy="11.5" r="2.8" fill="#d8a878" stroke="#0a0a0a" stroke-width=".9"/></svg>
<svg style="left:11px;top:335px" width="19" height="19" viewBox="0 0 19 19"><circle cx="9" cy="9.5" r="7.6" fill="#e8eaee" opacity=".85"/><path d="M3.5 4 L14.5 1.5 V13 L9 14 L7.5 17 L6.5 14.5 L3.5 15.5 Z" fill="#f4a840" stroke="#d88820" stroke-width=".7"/><path d="M5 6 V13" stroke="#e8d050" stroke-width="1.2"/><path d="M8 13.5 Q11 10 15 14.5 L10 16 Z" fill="#fff"/><circle cx="8.3" cy="9.5" r=".9" fill="#222"/></svg>
<svg style="left:1247px;top:179px" width="20" height="19" viewBox="0 0 20 19"><path d="M6 3 Q10 .5 16.5 3 V10 H6 Z" fill="#e84848"/><path d="M12.5 3 Q14 2 15.5 3.5 V9.5 H12.5 Z" fill="#f8b8b8"/><path d="M10 10 H17.5 V14 L13 15 Z" fill="#f08028"/><path d="M3 6.5 L12 7.5 V10.5 L3 10.8 Z M3 12.5 L12 11.5 V14 L3 16.5 Z" fill="#050505"/><circle cx="3.8" cy="8.6" r="1.8" fill="#38c8f0"/><circle cx="3.8" cy="14.6" r="1.8" fill="#28b8e8"/></svg>
<svg style="left:1247px;top:244px" width="20" height="20" viewBox="0 0 20 20"><circle cx="13.4" cy="7" r="4" fill="#6a8ab8" stroke="#8a8a8a" stroke-width=".9"/><path d="M10.5 10 L7 13" stroke="#888" stroke-width="1.2"/><ellipse cx="6.5" cy="10.5" rx="3.8" ry="1.3" fill="#e8d8b8" transform="rotate(-15 6.5 10.5)"/><rect x="3.2" y="11" width="7" height="6" rx="1.5" fill="#189838"/><path d="M5 12 V16.5 M7 12 V16.5" stroke="#50d060" stroke-width=".8"/><path d="M8.5 12 V15.5" stroke="#d8e850" stroke-width=".9"/><path d="M10 14 L13 12.5 L11.5 15 Z" fill="#d01828"/></svg>


<div class="vtxt" style="left:1263px;top:200px;font-size:12px;letter-spacing:-.1px">Search</div>
<div class="vtxt" style="left:1263px;top:266px;font-size:12px;letter-spacing:-.1px">Saved Datasets</div>
</div>
</body>
</html>
